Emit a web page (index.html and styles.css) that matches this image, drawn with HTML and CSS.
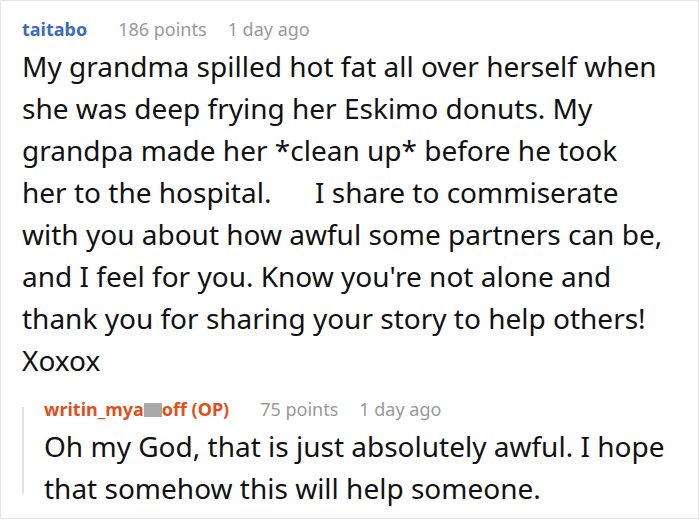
FILE: index.html
```html
<!DOCTYPE html>
<html>
<head>
<meta charset="utf-8">
<link rel="stylesheet" href="styles.css">
</head>
<body>
<div class="card">
  <div class="comment">
    <div class="meta">
      <span class="user user-blue">taitabo</span>
      <span class="info">186 points</span>
      <span class="info">1 day ago</span>
    </div>
    <p class="text">My grandma spilled hot fat all over herself when she was deep frying her Eskimo donuts. My grandpa made her *clean up* before he took her to the hospital. &nbsp;&nbsp;&nbsp;&nbsp;&nbsp;I share to commiserate with you about how awful some partners can be, and I feel for you. Know you're not alone and thank you for sharing your story to help others! Xoxox</p>
    <div class="reply">
      <div class="bar"></div>
      <div class="reply-body">
        <div class="meta">
          <span class="user user-orange">writin_mya<span class="censor"></span>off (OP)</span>
          <span class="info">75 points</span>
          <span class="info">1 day ago</span>
        </div>
        <p class="text">Oh my God, that is just absolutely awful. I hope that somehow this will help someone.</p>
      </div>
    </div>
  </div>
</div>
</body>
</html>
```
FILE: styles.css
```css
html, body {
  margin: 0;
  padding: 0;
  background: #fff;
}
.card {
  box-sizing: border-box;
  width: 699px;
  height: 519px;
  border: 1px solid #e6e6e6;
  overflow: hidden;
  font-family: "Noto Sans", "Open Sans", sans-serif;
}
.comment {
  padding: 15px 30px 0 21px;
}
.meta {
  display: flex;
  align-items: baseline;
  font-size: 18px;
  line-height: 26px;
  white-space: nowrap;
}
.user {
  font-weight: 700;
  margin-right: 31px;
}
.user-blue { color: #3d6bbf; }
.user-orange { color: #e0501b; }
.censor {
  display: inline-block;
  width: 18px;
  height: 14px;
  background: #a9a9a9;
  vertical-align: -1px;
}
.info {
  color: #9a9a9a;
  margin-right: 21px;
}
.text {
  margin: 3px 0 0;
  font-size: 28px;
  line-height: 42px;
  color: #111;
}
.reply {
  display: flex;
  margin-top: 15px;
}
.bar {
  width: 2px;
  background: #e3e3e3;
  margin: 11px 20px 15px 0;
  flex: none;
}
.reply-body {
  flex: 1;
}
```
